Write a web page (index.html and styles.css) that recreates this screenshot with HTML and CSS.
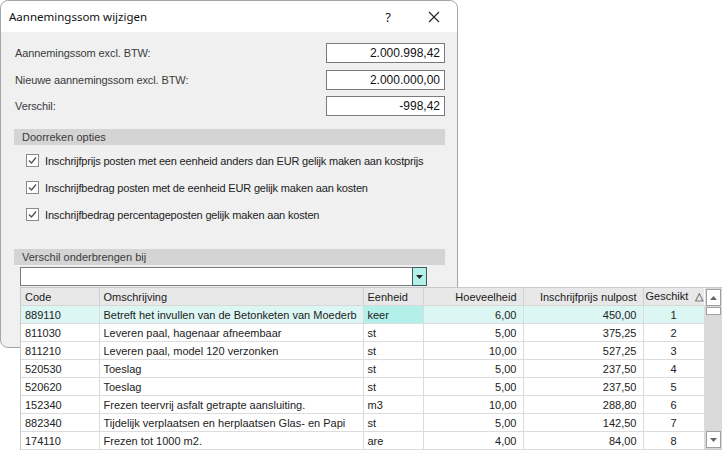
FILE: index.html
```html
<!DOCTYPE html>
<html>
<head>
    <meta charset="UTF-8">
    <title>Aannemingssom wijzigen</title>
    <link rel="stylesheet" href="styles.css">
</head>
<body>
    <div class="dialog">
        <div class="titlebar">
            <span class="title">Aannemingssom wijzigen</span>
            <div class="caption-buttons">
                <span class="cap-btn">?</span>
                <span class="cap-btn">
                    <svg width="12" height="12" viewBox="0 0 12 12"><path d="M1 1 L11 11 M11 1 L1 11" stroke="#222" stroke-width="1.1" fill="none"/></svg>
                </span>
            </div>
        </div>

        <div class="content">
            <div class="form-row">
                <label>Aannemingssom excl. BTW:</label>
                <div class="num-box">2.000.998,42</div>
            </div>
            <div class="form-row">
                <label>Nieuwe aannemingssom excl. BTW:</label>
                <div class="num-box">2.000.000,00</div>
            </div>
            <div class="form-row">
                <label>Verschil:</label>
                <div class="num-box">-998,42</div>
            </div>

            <div class="section-bar">Doorreken opties</div>
            <div class="check-list">
                <div class="check-row">
                    <span class="checkbox"><svg width="9" height="9" viewBox="0 0 9 9"><path d="M1 4.5 L3.5 7 L8 1.5" stroke="#555" stroke-width="1.4" fill="none"/></svg></span>
                    <span>Inschrijfprijs posten met een eenheid anders dan EUR gelijk maken aan kostprijs</span>
                </div>
                <div class="check-row">
                    <span class="checkbox"><svg width="9" height="9" viewBox="0 0 9 9"><path d="M1 4.5 L3.5 7 L8 1.5" stroke="#555" stroke-width="1.4" fill="none"/></svg></span>
                    <span>Inschrijfbedrag posten met de eenheid EUR gelijk maken aan kosten</span>
                </div>
                <div class="check-row">
                    <span class="checkbox"><svg width="9" height="9" viewBox="0 0 9 9"><path d="M1 4.5 L3.5 7 L8 1.5" stroke="#555" stroke-width="1.4" fill="none"/></svg></span>
                    <span>Inschrijfbedrag percentageposten gelijk maken aan kosten</span>
                </div>
            </div>

            <div class="section-bar section-bar-2">Verschil onderbrengen bij</div>
            <div class="combo">
                <div class="combo-field"></div>
                <div class="combo-btn">
                    <svg width="7" height="4" viewBox="0 0 7 4"><path d="M0 0 L7 0 L3.5 4 Z" fill="#222"/></svg>
                </div>

                <div class="popup">
                    <div class="grid-wrap">
                        <table class="grid">
                            <colgroup>
                                <col class="c-code"><col class="c-oms"><col class="c-eenh"><col class="c-hoev"><col class="c-prijs"><col class="c-ges">
                            </colgroup>
                            <thead>
                                <tr>
                                    <th>Code</th>
                                    <th>Omschrijving</th>
                                    <th>Eenheid</th>
                                    <th class="r">Hoeveelheid</th>
                                    <th class="r">Inschrijfprijs nulpost</th>
                                    <th class="sorted">Geschikt <span class="sort-mark">&#9651;</span></th>
                                </tr>
                            </thead>
                            <tbody>
                                <tr class="selected"><td>889110</td><td>Betreft het invullen van de Betonketen van Moederb</td><td class="current">keer</td><td class="r">6,00</td><td class="r">450,00</td><td class="c">1</td></tr>
                                <tr><td>811030</td><td>Leveren paal, hagenaar afneembaar</td><td>st</td><td class="r">5,00</td><td class="r">375,25</td><td class="c">2</td></tr>
                                <tr><td>811210</td><td>Leveren paal, model 120 verzonken</td><td>st</td><td class="r">10,00</td><td class="r">527,25</td><td class="c">3</td></tr>
                                <tr><td>520530</td><td>Toeslag</td><td>st</td><td class="r">5,00</td><td class="r">237,50</td><td class="c">4</td></tr>
                                <tr><td>520620</td><td>Toeslag</td><td>st</td><td class="r">5,00</td><td class="r">237,50</td><td class="c">5</td></tr>
                                <tr><td>152340</td><td>Frezen teervrij asfalt getrapte aansluiting.</td><td>m3</td><td class="r">10,00</td><td class="r">288,80</td><td class="c">6</td></tr>
                                <tr><td>882340</td><td>Tijdelijk verplaatsen en herplaatsen Glas- en Papi</td><td>st</td><td class="r">5,00</td><td class="r">142,50</td><td class="c">7</td></tr>
                                <tr><td>174110</td><td>Frezen tot 1000 m2.</td><td>are</td><td class="r">4,00</td><td class="r">84,00</td><td class="c">8</td></tr>
                            </tbody>
                        </table>
                        <div class="scrollbar">
                            <div class="sb-btn">
                                <svg width="7" height="4" viewBox="0 0 7 4"><path d="M0 4 L7 4 L3.5 0 Z" fill="#666"/></svg>
                            </div>
                            <div class="sb-thumb"></div>
                            <div class="sb-track"></div>
                            <div class="sb-btn">
                                <svg width="7" height="4" viewBox="0 0 7 4"><path d="M0 0 L7 0 L3.5 4 Z" fill="#666"/></svg>
                            </div>
                        </div>
                    </div>
                </div>
            </div>
        </div>
    </div>
</body>
</html>
```

FILE: styles.css
```css
html, body {
    height: 451px;
}
body {
    margin: 0;
    background: #ffffff;
    font-family: "Liberation Sans", Arial, sans-serif;
    font-size: 11px;
    color: #333;
    overflow: hidden;
}
.dialog {
    width: 456px;
    height: 346px;
    border: 1px solid #a6a6a6;
    border-radius: 8px;
    background: #f0f0f0;
}
.titlebar {
    height: 31px;
    background: #fff;
    border-radius: 8px 8px 0 0;
    display: flex;
    align-items: center;
    justify-content: space-between;
}
.title {
    font-family: "Noto Sans", sans-serif;
    font-size: 11.5px;
    color: #111;
    padding-left: 8px;
}
.caption-buttons {
    display: flex;
    height: 100%;
}
.cap-btn {
    width: 46px;
    display: flex;
    align-items: center;
    justify-content: center;
    font-family: "Noto Sans", sans-serif;
    font-size: 13px;
    color: #222;
}
.content {
    padding: 11px 12px 0 13px;
}
.form-row {
    display: flex;
    align-items: center;
    justify-content: space-between;
    height: 20px;
    margin-bottom: 6.5px;
    padding-left: 1px;
}
.form-row label {
    color: #3a3a3a;
    letter-spacing: -0.1px;
}
.num-box {
    width: 113px;
    height: 18px;
    line-height: 18px;
    background: #fff;
    border: 1px solid #7a7a7a;
    text-align: right;
    padding-right: 4px;
    color: #111;
    font-size: 12px;
}
.section-bar {
    margin-top: 13px;
    height: 16px;
    line-height: 16px;
    background: #d4d4d4;
    padding-left: 8px;
    color: #3a3a3a;
}
.check-list {
    padding: 2px 0 0 12px;
}
.check-row {
    display: flex;
    align-items: center;
    height: 27px;
    color: #222;
    letter-spacing: -0.18px;
}
.checkbox {
    width: 11px;
    height: 11px;
    border: 1px solid #8a8a8a;
    background: #fff;
    display: flex;
    align-items: center;
    justify-content: center;
    margin-right: 6px;
}
.section-bar-2 {
    margin-top: 21px;
}
.combo {
    position: relative;
    display: flex;
    margin: 2px 18px 0 6px;
    height: 19px;
}
.combo-field {
    flex: 1;
    background: #fff;
    border: 1px solid #7a7a7a;
    border-right: none;
}
.combo-btn {
    width: 13px;
    background: #b3f0ea;
    border: 1px solid #3c5a5a;
    display: flex;
    align-items: center;
    justify-content: center;
}
.popup {
    position: absolute;
    top: 20px;
    left: 0;
    width: 702px;
    height: 163px;
    background: #fff;
    border: 1px solid #c8c8c8;
    border-right: none;
    box-sizing: border-box;
}
.grid-wrap {
    display: flex;
    height: 100%;
}
.grid {
    border-collapse: collapse;
    table-layout: fixed;
    width: 683px;
    font-size: 11px;
    color: #222;
}
.c-code { width: 78px; }
.c-oms { width: 264px; }
.c-eenh { width: 60px; }
.c-hoev { width: 100px; }
.c-prijs { width: 120px; }
.c-ges { width: 61px; }
.grid th {
    height: 17px;
    background: #e8e8e8;
    font-weight: normal;
    text-align: left;
    padding: 0 4px;
    border-right: 1px solid #d2d2d2;
    border-bottom: 1px solid #d8d8d8;
    white-space: nowrap;
    overflow: hidden;
    color: #1a1a1a;
}
.grid th.r { text-align: right; padding-right: 6px; }
.grid th.sorted { padding-left: 2px; padding-right: 0; border-right: none; }
.sort-mark {
    font-size: 11px;
    padding-left: 4px;
}
.grid td {
    height: 17px;
    padding: 0 4px;
    border-right: 1px solid #dcdcdc;
    border-bottom: 1px solid #dcdcdc;
    white-space: nowrap;
    overflow: hidden;
}
.grid td.r { text-align: right; padding-right: 6px; }
.grid td.c { text-align: center; }
.grid tr.selected td { background: #dcf6f4; }
.grid tr.selected td.current { background: #b3f0ea; }
.scrollbar {
    width: 19px;
    display: flex;
    flex-direction: column;
    background: #dadada;
}
.sb-btn {
    height: 15px;
    margin: 1px 1px 0 1px;
    background: #fff;
    border: 1px solid #a0a0a0;
    display: flex;
    align-items: center;
    justify-content: center;
}
.sb-btn:last-child {
    margin: 0 1px 1px 1px;
}
.sb-thumb {
    height: 6px;
    margin: 1px 1px 0 1px;
    background: #fff;
    border: 1px solid #a0a0a0;
}
.sb-track {
    flex: 1;
}
```
